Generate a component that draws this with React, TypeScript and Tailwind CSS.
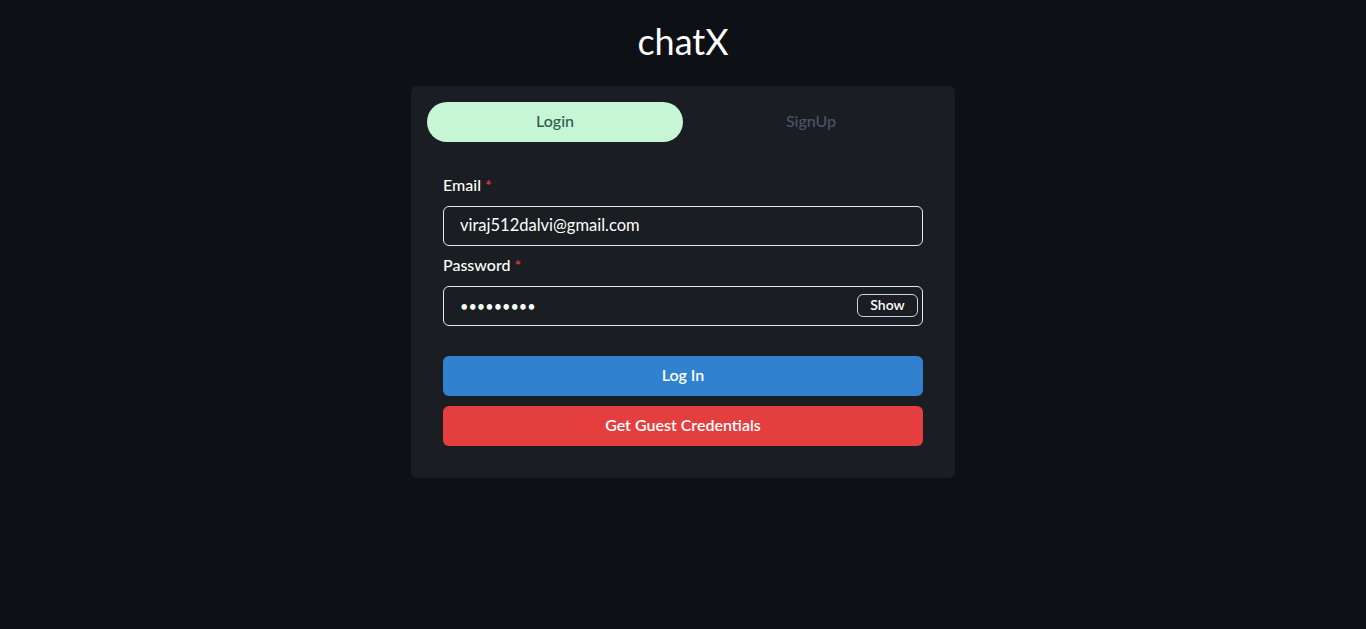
import React, { useState } from 'react';

export default function App() {
  const [tab, setTab] = useState<'login' | 'signup'>('login');
  const [show, setShow] = useState(false);

  return (
    <div
      className="min-h-screen w-full bg-[#0d1014] text-white flex flex-col items-center"
      style={{ fontFamily: 'Lato, "Open Sans", sans-serif' }}
    >
      {/* Title */}
      <div className="pt-[20px] pb-[23px] w-full flex justify-center">
        <h1 className="text-[36px] leading-[43px] font-normal text-white">chatX</h1>
      </div>

      {/* Card */}
      <div className="w-[544px] bg-[#1a1d21] rounded-md p-4">
        {/* Tabs */}
        <div className="flex">
          <button
            onClick={() => setTab('login')}
            className={`flex-1 h-10 pb-[2px] rounded-full text-base font-medium ${
              tab === 'login' ? 'bg-[#c6f6d5] text-[#2c5f4c]' : 'text-[#4a5568]'
            }`}
          >
            Login
          </button>
          <button
            onClick={() => setTab('signup')}
            className={`flex-1 h-10 pb-[2px] rounded-full text-base font-medium ${
              tab === 'signup' ? 'bg-[#c6f6d5] text-[#2c5f4c]' : 'text-[#4a5568]'
            }`}
          >
            SignUp
          </button>
        </div>

        {/* Form */}
        <div className="p-4 pt-[31px] flex flex-col">
          <label className="text-base font-medium leading-6 mb-[9px]">
            Email<span className="text-[#e53e3e] ml-1">*</span>
          </label>
          <input
            readOnly
            defaultValue="viraj512dalvi@gmail.com"
            className="h-10 w-full rounded-md border border-[#e2e8f0] bg-transparent px-4 pb-[2px] text-[16.5px] text-white outline-none"
          />

          <label className="text-base font-medium leading-6 mb-[9px] mt-[7px]">
            Password<span className="text-[#e53e3e] ml-1">*</span>
          </label>
          <div className="relative">
            <input
              readOnly
              type={show ? 'text' : 'password'}
              defaultValue="viraj1234"
              className="h-10 w-full rounded-md border border-[#e2e8f0] bg-transparent pl-4 pr-20 text-[14.5px] text-white outline-none"
            />
            <button
              onClick={() => setShow(!show)}
              className="absolute right-[5px] top-[8px] h-[23px] w-[61px] pb-[1px] rounded-md border border-[#cbd5e0] text-sm font-semibold text-white"
            >
              {show ? 'Hide' : 'Show'}
            </button>
          </div>

          <button className="mt-[30px] h-10 w-full pb-[3px] rounded-md bg-[#3182ce] text-base font-semibold text-white">
            Log In
          </button>
          <button className="mt-[10px] h-10 w-full pb-[3px] rounded-md bg-[#e53e3e] text-base font-semibold text-white">
            Get Guest Credentials
          </button>
        </div>
      </div>
    </div>
  );
}
